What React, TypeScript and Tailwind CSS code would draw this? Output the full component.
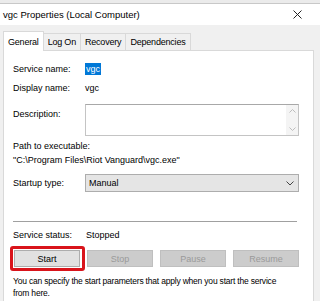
import React from "react";

const font = { fontFamily: '"Liberation Sans", Arial, sans-serif' };

const Tab = ({ label, active }: { label: string; active?: boolean }) =>
  active ? (
    <div className="relative z-10 -mb-px flex h-[20px] items-start border border-b-0 border-[#d9d9d9] bg-white px-[4px] pt-[4px] tracking-[-0.2px]">
      {label}
    </div>
  ) : (
    <div className="-ml-px flex h-[17px] items-center border border-b-0 border-[#d9d9d9] bg-[#f0f0f0] px-[4px] tracking-[-0.2px]">
      {label}
    </div>
  );

const Btn = ({ label, enabled }: { label: string; enabled?: boolean }) => (
  <div
    className={
      enabled
        ? "flex h-[17px] w-[66px] items-center justify-center border border-[#adadad] bg-[#e1e1e1] text-black"
        : "flex h-[17px] w-[66px] items-center justify-center border border-[#bfbfbf] bg-[#cccccc] text-[#9a9a9a]"
    }
  >
    {label}
  </div>
);

export default function App() {
  return (
    <div
      className="flex h-[301px] w-[320px] flex-col overflow-hidden bg-[#f0f0f0] text-[9px] leading-[12px] text-black"
      style={font}
    >
      {/* top edge */}
      <div className="h-[4px] shrink-0 border-b border-[#c8c8c8] bg-[#ebebeb]" />

      {/* Title bar */}
      <div className="flex h-[21px] shrink-0 items-center justify-between bg-white pl-[3px] pr-[18px]">
        <span className="text-[9.5px]">vgc Properties (Local Computer)</span>
        <svg width="9" height="9" viewBox="0 0 9 9" className="stroke-[#222]">
          <path d="M0.5 0.5 L8.5 8.5 M8.5 0.5 L0.5 8.5" strokeWidth="1" />
        </svg>
      </div>

      {/* Tabs */}
      <div className="flex shrink-0 items-end px-[3px] pt-[6px]">
        <Tab label="General" active />
        <Tab label="Log On" />
        <Tab label="Recovery" />
        <Tab label="Dependencies" />
      </div>

      {/* Panel */}
      <div className="ml-[3px] flex w-[311px] shrink-0 flex-col border border-[#d9d9d9] bg-white pb-[20px] pl-[9px] pr-[14px]">
        <div className="mt-[12px] flex">
          <span className="w-[72px]">Service name:</span>
          <span className="bg-[#0078d7] px-[1px] text-white">vgc</span>
        </div>
        <div className="mt-[7px] flex">
          <span className="w-[72px]">Display name:</span>
          <span>vgc</span>
        </div>
        <div className="mt-[10px] flex">
          <span className="w-[72px] pt-[4px]">Description:</span>
          <div className="flex h-[32px] flex-1 justify-end border border-[#c4c4c4] border-t-[#a8a8a8]">
            <div className="flex w-[12px] flex-col items-center justify-between bg-[#f4f4f4] py-[4px]">
              <svg width="7" height="4" viewBox="0 0 7 4" className="stroke-[#bdbdbd]" fill="none">
                <path d="M0.5 3.5 L3.5 0.5 L6.5 3.5" />
              </svg>
              <svg width="7" height="4" viewBox="0 0 7 4" className="stroke-[#bdbdbd]" fill="none">
                <path d="M0.5 0.5 L3.5 3.5 L6.5 0.5" />
              </svg>
            </div>
          </div>
        </div>
        <div className="mt-[4px]">Path to executable:</div>
        <div className="mt-[2px]">"C:\Program Files\Riot Vanguard\vgc.exe"</div>
        <div className="mt-[8px] flex items-center">
          <span className="w-[72px]">Startup type:</span>
          <div className="flex h-[18px] flex-1 items-center justify-between border border-[#adadad] bg-[#e5e5e5] pl-[3px] pr-[4px]">
            <span>Manual</span>
            <svg width="8" height="5" viewBox="0 0 8 5" className="stroke-[#444]" fill="none">
              <path d="M0.5 0.5 L4 4 L7.5 0.5" />
            </svg>
          </div>
        </div>
        <div className="mr-[2px] mt-[29px] h-px bg-[#a0a0a0]" />
        <div className="mt-[7px] flex">
          <span className="w-[73px]">Service status:</span>
          <span>Stopped</span>
        </div>
        <div className="relative ml-[1px] mt-[9px] flex gap-[7px]">
          <Btn label="Start" enabled />
          <Btn label="Stop" />
          <Btn label="Pause" />
          <Btn label="Resume" />
          <div className="absolute left-[-4px] top-[-4px] h-[25px] w-[75px] rounded-[3px] border-[3px] border-[#d9141b]" />
        </div>
        <div className="mt-[8px] whitespace-nowrap text-[8.5px] tracking-[-0.2px]">
          You can specify the start parameters that apply when you start the service
          <br />
          from here.
        </div>
      </div>
    </div>
  );
}
